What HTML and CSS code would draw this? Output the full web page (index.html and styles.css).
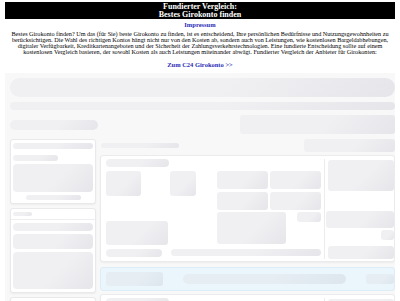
FILE: index.html
```html
<!DOCTYPE html>
<html lang="de">
<head>
    <meta charset="UTF-8">
    <meta name="viewport" content="width=device-width, initial-scale=1.0">
    <title>Fundierter Vergleich: Bestes Girokonto finden</title>
    <link rel="stylesheet" href="styles.css">
</head>
<body>
    <div class="banner">Fundierter Vergleich:<br>Bestes Girokonto finden</div>
    <a class="impressum" href="#">Impressum</a>
    <p class="intro">Bestes Girokonto finden? Um das (für Sie) beste Girokonto zu finden, ist es entscheidend, Ihre persönlichen Bedürfnisse und Nutzungsgewohnheiten zu berücksichtigen. Die Wahl des richtigen Kontos hängt nicht nur von den Kosten ab, sondern auch von Leistungen, wie kostenlosen Bargeldabhebungen, digitaler Verfügbarkeit, Kreditkartenangeboten und der Sicherheit der Zahlungsverkehrstechnologien. Eine fundierte Entscheidung sollte auf einem kostenlosen Vergleich basieren, der sowohl Kosten als auch Leistungen miteinander abwägt. Fundierter Vergleich der Anbieter für Girokonten:</p>
    <a class="cta" href="#">Zum C24 Girokonto &gt;&gt;</a>

    <!-- comparison widget, still loading -->
    <div class="loader">
        <div class="sk top-bar"></div>
        <div class="sk top-thin"></div>
        <div class="top-row">
            <div class="sk top-left"></div>
            <div class="sk top-right"></div>
        </div>

        <div class="columns">
            <div class="sidebar">
                <div class="side-card">
                    <div class="sk side-pill"></div>
                    <div class="sk side-short"></div>
                    <div class="sk side-box"></div>
                    <div class="sk side-foot"></div>
                </div>
                <div class="side-card">
                    <div class="sk side-tag"></div>
                    <div class="side-line"></div>
                    <div class="sk side-pill2"></div>
                    <div class="sk side-box2"></div>
                    <div class="sk side-box3"></div>
                </div>
                <div class="side-card">
                    <div class="sk side-pill2"></div>
                </div>
            </div>

            <div class="results">
                <div class="results-head">
                    <div class="sk head-title"></div>
                    <div class="sk head-sort"></div>
                </div>

                <div class="offer">
                    <div class="offer-main">
                        <div class="sk offer-title"></div>
                        <div class="offer-body">
                            <div class="offer-left">
                                <div class="offer-logos">
                                    <div class="sk logo"></div>
                                    <div class="sk badge"></div>
                                </div>
                                <div class="sk offer-rating"></div>
                            </div>
                            <div class="features">
                                <div class="sk feat"></div>
                                <div class="sk feat"></div>
                                <div class="sk feat"></div>
                                <div class="sk feat"></div>
                                <div class="feat-row">
                                    <div class="sk feat-wide"></div>
                                    <div class="sk feat-small"></div>
                                </div>
                            </div>
                        </div>
                        <div class="offer-foot">
                            <div class="sk foot-a"></div>
                            <div class="sk foot-b"></div>
                        </div>
                    </div>
                    <div class="offer-side">
                        <div class="sk price"></div>
                        <div class="sk price2"></div>
                        <div class="sk price-note"></div>
                        <div class="sk button"></div>
                    </div>
                </div>

                <div class="promo">
                    <div class="sk promo-a"></div>
                    <div class="sk promo-b"></div>
                    <div class="sk promo-c"></div>
                </div>

                <div class="offer">
                    <div class="offer-main">
                        <div class="sk offer-title"></div>
                    </div>
                    <div class="offer-side">
                        <div class="sk price"></div>
                    </div>
                </div>
            </div>
        </div>
    </div>
</body>
</html>
```

FILE: styles.css
```css
html, body {
    height: 301px;
    overflow: hidden;
}
body {
    box-sizing: border-box;
    margin: 0;
    padding: 2px 5px 0;
    font-family: "Liberation Serif", "Times New Roman", serif;
    background: #fff;
    color: #000;
}
.banner {
    background: #000;
    color: #fff;
    font-weight: bold;
    font-size: 8px;
    line-height: 8px;
    padding: 0.5px 0;
    text-align: center;
}
.impressum, .cta {
    display: block;
    text-align: center;
    font-weight: bold;
    font-size: 6.5px;
    line-height: 7px;
    color: #2b2bb5;
    text-decoration: none;
}
.impressum {
    margin-top: 2px;
}
.intro {
    margin: 3px 3px 0;
    font-size: 6.2px;
    line-height: 6px;
    text-align: center;
}
.cta {
    margin-top: 6px;
}

/* skeleton */
.loader {
    margin-top: 5px;
    padding: 5px 0 0 5px;
    background: #f8f8f9;
    height: 224px;
    overflow: hidden;
}
.sk {
    background: linear-gradient(135deg, #f0f0f3 55%, #e6e6ea);
    border-radius: 3px;
}
.top-bar {
    height: 19px;
    border-radius: 10px;
}
.top-thin {
    height: 8px;
    margin-top: 5px;
    border-radius: 4px;
}
.top-row {
    display: flex;
    justify-content: space-between;
    align-items: center;
    margin-top: 5px;
}
.top-left {
    width: 88px;
    height: 10px;
    border-radius: 5px;
}
.top-right {
    width: 155px;
    height: 19px;
}
.columns {
    display: grid;
    grid-template-columns: 86px 295px;
    gap: 4px;
    margin-top: 5px;
    align-items: start;
}
.sidebar {
    display: flex;
    flex-direction: column;
    gap: 4px;
}
.side-card {
    background: #fff;
    border: 1px solid #e9e9ec;
    border-radius: 3px;
    box-shadow: 0 1px 2px rgba(0, 0, 0, 0.05);
    padding: 3px 2px;
    display: flex;
    flex-direction: column;
    gap: 3px;
}
.side-pill {
    height: 6px;
    border-radius: 3px;
}
.side-short {
    width: 45px;
    height: 6px;
    margin-top: 3px;
    border-radius: 3px;
}
.side-box {
    height: 28px;
    border-radius: 4px;
}
.side-foot {
    width: 55px;
    height: 5px;
    align-self: center;
    border-radius: 3px;
}
.side-tag {
    width: 19px;
    height: 4px;
    border-radius: 2px;
}
.side-line {
    height: 1px;
    background: #eeeef0;
    margin: 0 -2px;
}
.side-pill2 {
    height: 8px;
    border-radius: 4px;
}
.side-box2 {
    height: 15px;
    border-radius: 4px;
}
.side-box3 {
    height: 37px;
    border-radius: 4px;
}
.results {
    display: flex;
    flex-direction: column;
}
.results-head {
    display: flex;
    justify-content: space-between;
    align-items: center;
    padding-left: 1px;
}
.head-title {
    width: 78px;
    height: 5px;
    border-radius: 3px;
}
.head-sort {
    width: 91px;
    height: 13px;
}
.offer {
    display: flex;
    background: #fff;
    border: 1px solid #ebebee;
    border-radius: 3px;
    box-shadow: 0 1px 2px rgba(0, 0, 0, 0.05);
    margin-top: 3px;
    padding: 3px 0 2px 5px;
}
.offer-main {
    width: 215px;
    padding-right: 3px;
    border-right: 1px solid #ececee;
}
.offer-title {
    width: 63px;
    height: 8px;
    border-radius: 4px;
}
.offer-body {
    display: flex;
    justify-content: space-between;
    margin-top: 4px;
}
.offer-logos {
    display: flex;
    gap: 29px;
}
.logo {
    width: 35px;
    height: 25px;
}
.badge {
    width: 26px;
    height: 25px;
}
.offer-rating {
    width: 62px;
    height: 24px;
    margin-top: 25px;
}
.features {
    width: 104px;
    display: grid;
    grid-template-columns: 1fr 1fr;
    gap: 2px;
}
.feat {
    height: 18px;
}
.feat-row {
    grid-column: span 2;
    display: flex;
    justify-content: space-between;
}
.feat-wide {
    width: 69px;
    height: 32px;
}
.feat-small {
    width: 24px;
    height: 10px;
}
.offer-foot {
    display: flex;
    gap: 9px;
    margin-top: 4px;
}
.foot-a {
    width: 56px;
    height: 8px;
    border-radius: 4px;
}
.foot-b {
    width: 150px;
    height: 7px;
    border-radius: 4px;
}
.offer-side {
    flex: 1;
    padding-left: 3px;
    display: flex;
    flex-direction: column;
}
.price {
    height: 31px;
    margin-top: 1px;
}
.price2 {
    height: 17px;
    margin-top: 20px;
    margin-left: -2px;
}
.price-note {
    width: 13px;
    height: 10px;
    margin-top: 2px;
    align-self: flex-end;
}
.button {
    height: 13px;
    margin-top: 6px;
}
.promo {
    display: flex;
    align-items: center;
    gap: 20px;
    margin-top: 5px;
    height: 22px;
    padding-left: 5px;
    background: #eaf5fc;
    border: 1px solid #ddedf7;
    border-radius: 3px;
}
.promo .sk {
    background: linear-gradient(135deg, #e6eef4 55%, #dde6ed);
}
.promo-a {
    width: 57px;
    height: 14px;
}
.promo-b {
    width: 163px;
    height: 10px;
    border-radius: 5px;
}
.promo-c {
    flex: 1;
    height: 10px;
}
```
